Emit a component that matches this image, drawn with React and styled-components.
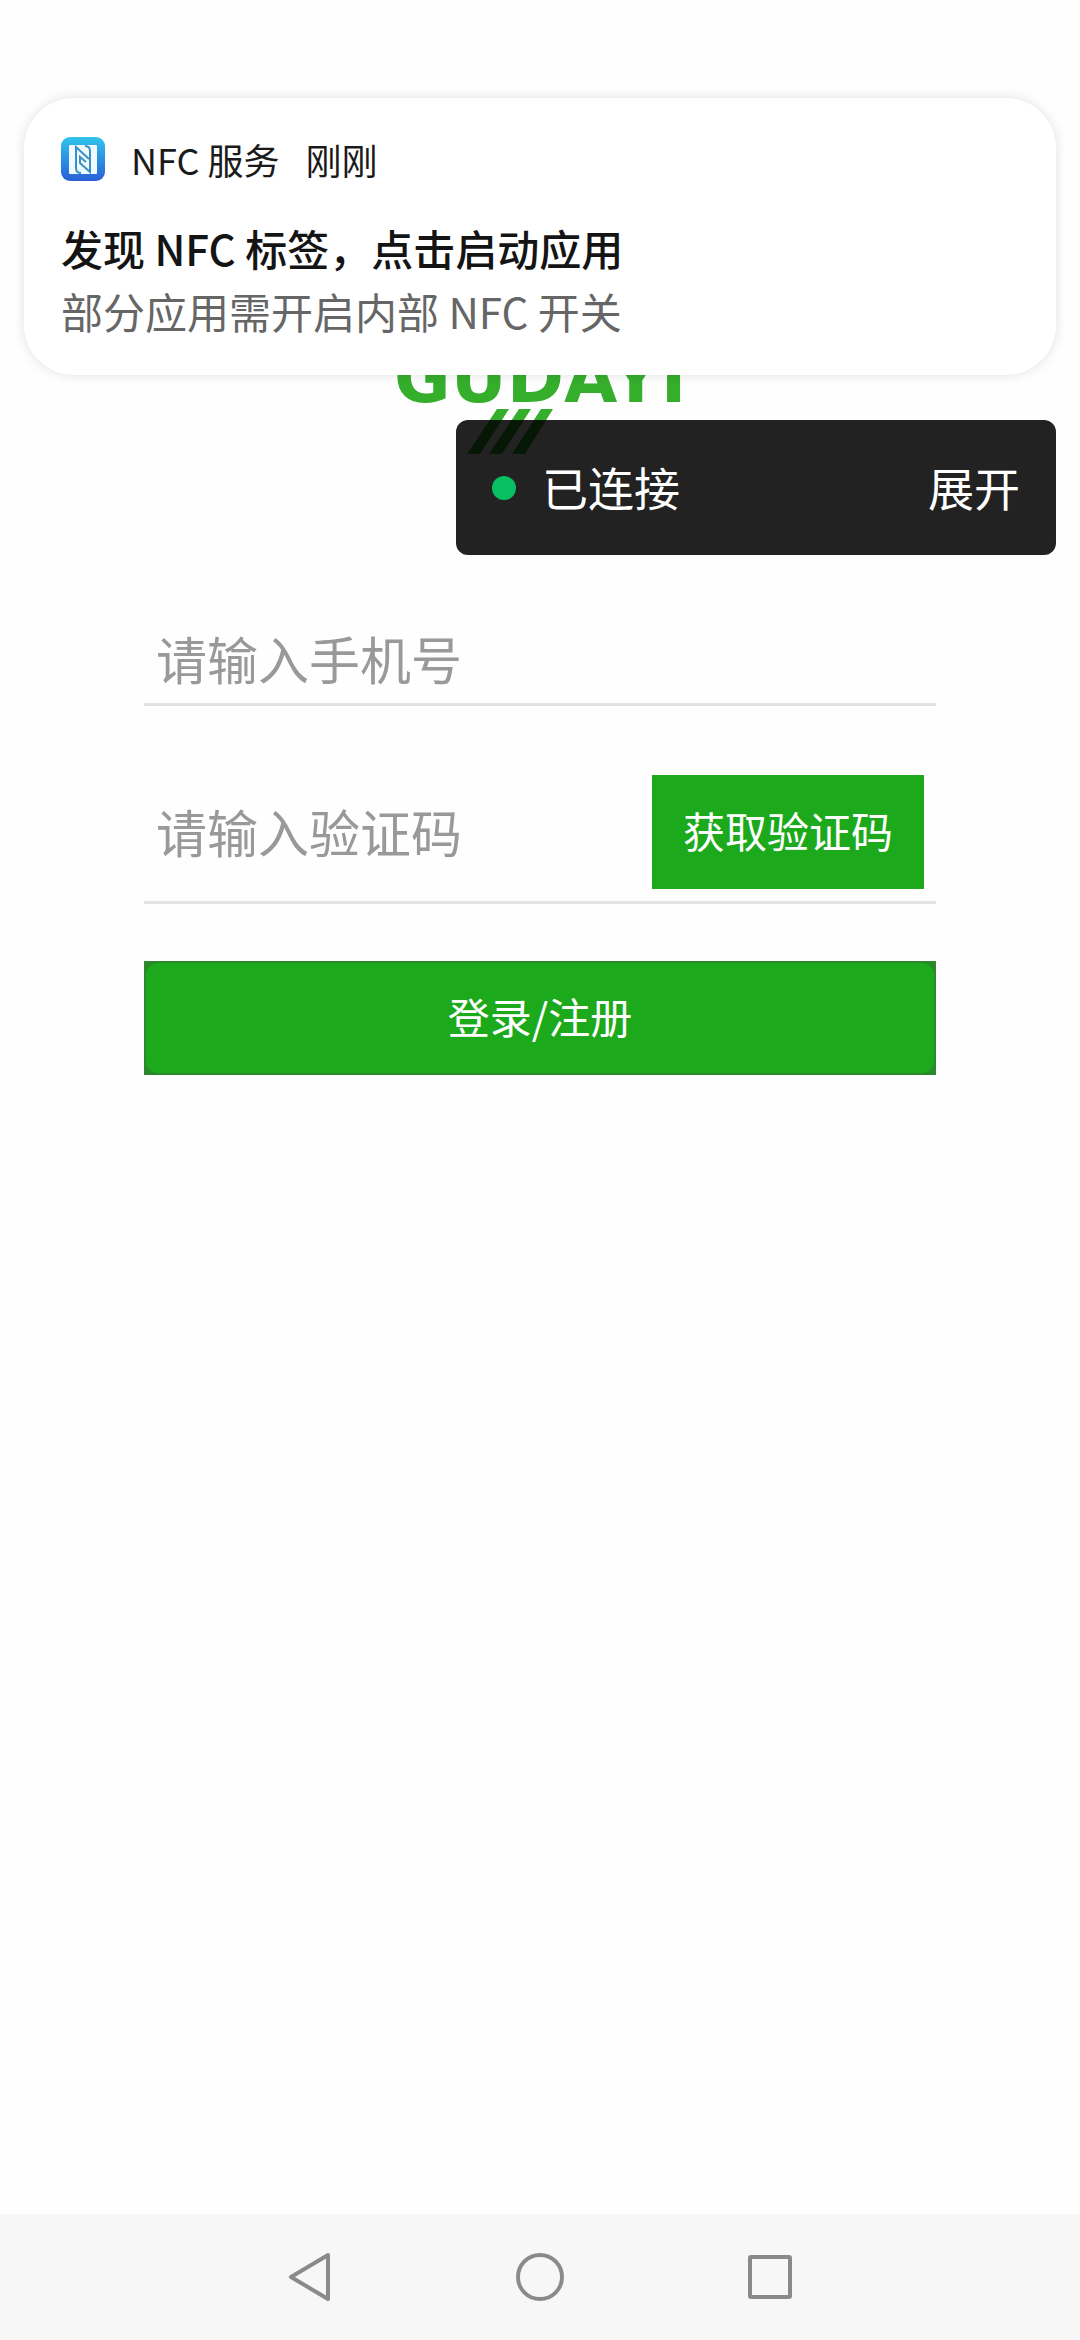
import React, { useState } from "react";
import styled, { createGlobalStyle } from "styled-components";

function App() {
  const [phone, setPhone] = useState("");
  const [code, setCode] = useState("");

  return (
    <>
      <GlobalStyle />
      <Page>
        <Main>
          <Logo viewBox="0 0 288 120" role="img" aria-label="GUDAYI">
            <LogoText x="-2" y="68">GUDAYI</LogoText>
            <path d="M101 75h12L84 120H71z" />
            <path d="M123 75h12L106 120H93z" />
            <path d="M145 75h12L129 120H116z" />
          </Logo>
          <Form onSubmit={(e) => e.preventDefault()}>
            <Field>
              <Input
                type="tel"
                aria-label="手机号"
                placeholder="请输入手机号"
                value={phone}
                onChange={(e) => setPhone(e.target.value)}
              />
            </Field>
            <Field $withButton>
              <Input
                type="text"
                aria-label="验证码"
                placeholder="请输入验证码"
                value={code}
                onChange={(e) => setCode(e.target.value)}
              />
              <CodeButton type="button">获取验证码</CodeButton>
            </Field>
            <LoginButton type="submit">
              <LoginLabel>登录/注册</LoginLabel>
            </LoginButton>
          </Form>
        </Main>

        <NavBar>
          <NavButton aria-label="返回">
            <NavIcon viewBox="0 0 48 48">
              <path d="M42 2L5 24L42 46Z" />
            </NavIcon>
          </NavButton>
          <NavButton aria-label="主页">
            <NavIcon viewBox="0 0 48 48">
              <circle cx="24" cy="24" r="22" />
            </NavIcon>
          </NavButton>
          <NavButton aria-label="最近任务">
            <NavIcon viewBox="0 0 48 48">
              <rect x="4" y="4" width="40" height="40" rx="1" />
            </NavIcon>
          </NavButton>
        </NavBar>
      </Page>

      <StatusPanel>
        <StatusDot />
        <StatusText>已连接</StatusText>
        <ExpandButton type="button">展开</ExpandButton>
      </StatusPanel>

      <Notification role="status">
        <NotificationHeader>
          <AppIcon viewBox="0 0 44 44" aria-hidden="true">
            <defs>
              <linearGradient id="nfcBg" x1="0" y1="0" x2="0" y2="1">
                <stop offset="0" stopColor="#2fc4ec" />
                <stop offset="1" stopColor="#2860d8" />
              </linearGradient>
            </defs>
            <rect width="44" height="44" rx="9" fill="url(#nfcBg)" />
            <rect x="8" y="8" width="28" height="29" rx="1" fill="#f0fbff" />
            <path
              d="M20 36Q15 36 15 31V10L28 22M24 9Q29 9 29 14V35L19 26V20L25 25"
              fill="none"
              stroke="#3a8fc4"
              strokeWidth="2"
            />
          </AppIcon>
          <span>NFC 服务</span>
          <Time>刚刚</Time>
        </NotificationHeader>
        <NotificationTitle>发现 NFC 标签，点击启动应用</NotificationTitle>
        <NotificationText>部分应用需开启内部 NFC 开关</NotificationText>
      </Notification>
    </>
  );
}

const GlobalStyle = createGlobalStyle`
  * {
    box-sizing: border-box;
  }

  body {
    margin: 0;
    background: #fefefe;
    font-family: "Noto Sans CJK SC", sans-serif;
  }

  button, input {
    font-family: inherit;
    border: none;
    padding: 0;
    margin: 0;
    background: none;
  }
`;

const Page = styled.div`
  display: flex;
  flex-direction: column;
  min-height: 100vh;
`;

const Main = styled.main`
  flex: 1;
  display: flex;
  flex-direction: column;
  align-items: center;
  padding: 334px 144px 0;
`;

const Logo = styled.svg`
  display: block;
  width: 288px;
  height: 120px;
  overflow: visible;
  fill: #35ae2c;
`;

const LogoText = styled.text`
  font-family: "DejaVu Sans", sans-serif;
  font-size: 69px;
  font-weight: 700;
`;

const Form = styled.form`
  width: 100%;
  margin-top: 160px;
`;

const Field = styled.div`
  display: flex;
  align-items: center;
  padding: ${({ $withButton }) => ($withButton ? "0 12px 12px" : "0 12px")};
  margin-bottom: ${({ $withButton }) => ($withButton ? "57px" : "69px")};
  border-bottom: 3px solid #e3e3e3;
`;

const Input = styled.input`
  flex: 1;
  min-width: 0;
  height: 89px;
  padding-bottom: 2px;
  font-size: 51px;
  color: #333;
  outline: none;

  &::placeholder {
    color: #999;
    opacity: 1;
  }
`;

const CodeButton = styled.button`
  padding: 0 31px 6px;
  height: 114px;
  background: #1caa1c;
  color: #fff;
  font-size: 42px;
  cursor: pointer;
`;

const LoginButton = styled.button`
  display: flex;
  width: 100%;
  height: 114px;
  padding: 2px;
  background: #2b882d;
  cursor: pointer;
`;

const LoginLabel = styled.span`
  flex: 1;
  align-self: stretch;
  display: flex;
  align-items: center;
  justify-content: center;
  padding-bottom: 6px;
  border-radius: 12px;
  background: #1caa1c;
  color: #fff;
  font-size: 42px;
`;

const NavBar = styled.nav`
  display: flex;
  align-items: center;
  justify-content: center;
  gap: 182px;
  height: 126px;
  background: #f7f7f7;
`;

const NavButton = styled.button`
  display: flex;
  cursor: pointer;
`;

const NavIcon = styled.svg`
  width: 48px;
  height: 48px;
  fill: none;
  stroke: #8a8a8a;
  stroke-width: 4;
  stroke-linejoin: round;
`;

// floats over the page, under the notification
const StatusPanel = styled.div`
  position: absolute;
  top: 420px;
  right: 24px;
  width: 600px;
  max-width: 90%;
  display: flex;
  align-items: center;
  height: 135px;
  padding: 0 36px;
  border-radius: 12px;
  background: rgba(0, 0, 0, 0.867);
  color: #fff;
  font-size: 46px;
`;

const StatusDot = styled.span`
  width: 24px;
  height: 24px;
  margin-right: 26px;
  border-radius: 50%;
  background: #07c160;
`;

const StatusText = styled.span`
  flex: 1;
  padding-bottom: 4px;
`;

const ExpandButton = styled.button`
  padding-bottom: 4px;
  color: #fff;
  font-size: 46px;
  cursor: pointer;
`;

const Notification = styled.section`
  position: absolute;
  top: 98px;
  left: 24px;
  right: 24px;
  padding: 33px 37px;
  border-radius: 50px;
  background: #fff;
  box-shadow: 0 0 12px rgba(0, 0, 0, 0.12);
`;

const NotificationHeader = styled.div`
  display: flex;
  align-items: center;
  height: 56px;
  margin-bottom: 29px;
  color: #1a1a1a;
  font-size: 36px;
`;

const AppIcon = styled.svg`
  width: 44px;
  height: 44px;
  margin-right: 26px;
`;

const Time = styled.span`
  margin-left: 26px;
`;

const NotificationTitle = styled.h2`
  margin: 0;
  color: #141414;
  font-size: 42px;
  font-weight: 500;
  line-height: 63px;
`;

const NotificationText = styled.p`
  margin: 0;
  color: #666;
  font-size: 42px;
  line-height: 63px;
`;

export default App;
